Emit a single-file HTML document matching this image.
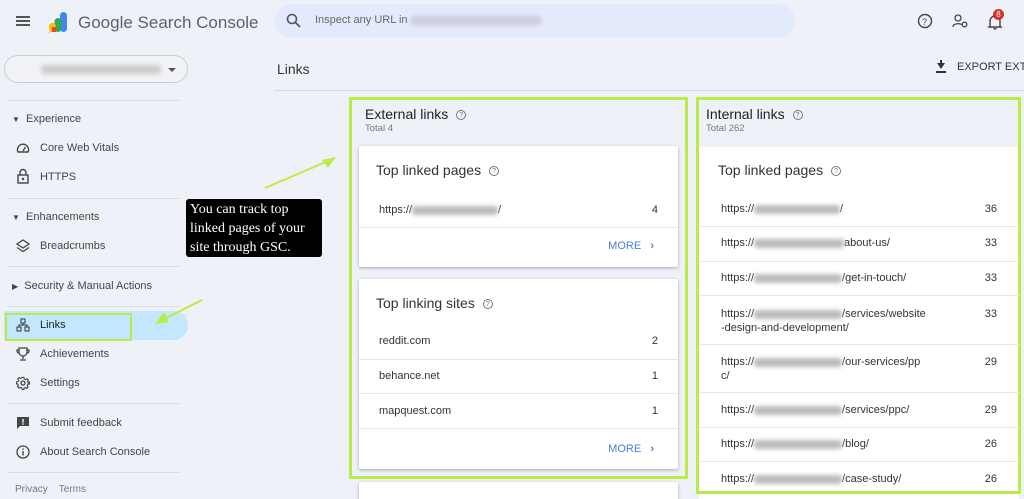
<!DOCTYPE html>
<html><head><style>
*{box-sizing:border-box;margin:0;padding:0}
html,body{width:1024px;height:499px;overflow:hidden}
body{background:#eef2f8;font-family:"Liberation Sans",Arial,sans-serif;color:#3c4043;position:relative}
.a{position:absolute}
.nav{font-size:11px;color:#444;}
.ic{position:absolute;left:16px}
.blur{display:inline-block;background:#bbb;filter:blur(2px);height:9px;vertical-align:middle;border-radius:3px}
.card{position:absolute;background:#fff;box-shadow:0 1px 3px rgba(0,0,0,.3);border-radius:2px}
.row{position:absolute;left:0;right:0;font-size:11px;color:#333;border-bottom:1px solid #e6e6e6}
.g{border:3px solid #b9ec45}
.q{display:inline-block;width:10px;height:10px;border:1px solid #777;border-radius:50%;font-size:7px;text-align:center;line-height:9px;color:#777;margin-left:8px;vertical-align:2px}
.more{position:absolute;right:24px;font-size:11px;color:#4a7fd8}
</style></head><body>
<!-- header -->
<div class="a" style="left:16px;top:16px;width:14px;height:2px;background:#555;box-shadow:0 4px 0 #555,0 8px 0 #555"></div>
<svg class="a" style="left:46px;top:10px" width="24" height="26" viewBox="0 0 24 26"><rect x="14" y="2" width="7" height="20" fill="#4285f4" rx="3.5"/><rect x="8.5" y="8" width="7" height="14" fill="#34a853" rx="3.5"/><rect x="3" y="13" width="7" height="9" fill="#fbbc04" rx="3.5"/><path d="M2 24l3-5h4z" fill="#fbbc04"/><rect x="6" y="17" width="4" height="5" fill="#ea4335"/></svg>
<div class="a" style="left:78px;top:13px;font-size:17px;color:#5f6368">Google Search Console</div>
<div class="a" style="left:275px;top:4px;width:520px;height:34px;background:#e3eafc;border-radius:17px"></div>
<svg class="a" style="left:286px;top:13px" width="15" height="15" viewBox="0 0 15 15"><circle cx="6" cy="6" r="4.5" fill="none" stroke="#555" stroke-width="1.6"/><line x1="9.5" y1="9.5" x2="14" y2="14" stroke="#555" stroke-width="1.8"/></svg>
<div class="a" style="left:315px;top:14px;font-size:11px;color:#666">Inspect any URL in <span class="blur" style="width:130px;background:#ccd"></span></div>
<svg class="a" style="left:917px;top:13px" width="16" height="16"><circle cx="8" cy="8" r="6.5" fill="none" stroke="#444" stroke-width="1.4"/><text x="5" y="12" font-size="9" fill="#444" font-family="Liberation Sans">?</text></svg>
<svg class="a" style="left:952px;top:13px" width="17" height="16"><circle cx="6" cy="5" r="3" fill="none" stroke="#444" stroke-width="1.3"/><path d="M1 14c0-4 8-4 9-2" fill="none" stroke="#444" stroke-width="1.3"/><circle cx="12.5" cy="11.5" r="2.3" fill="none" stroke="#444" stroke-width="1.3"/></svg>
<svg class="a" style="left:987px;top:13px" width="16" height="17"><path d="M3 13V8a5 5 0 0 1 10 0v5l1 1H2z" fill="none" stroke="#444" stroke-width="1.4"/><rect x="6.5" y="15" width="3" height="1.5" fill="#444"/></svg>
<div class="a" style="left:993px;top:9px;width:11px;height:11px;border-radius:50%;background:#d93025;color:#fff;font-size:8px;text-align:center;line-height:11px">8</div>
<!-- property select -->
<div class="a" style="left:4px;top:55px;width:184px;height:28px;border:1px solid #ccc;border-radius:14px;background:#f1f3f6"><span class="blur a" style="left:36px;top:9px;width:120px;background:#ccc"></span><div class="a" style="left:163px;top:12px;border:4px solid transparent;border-top:4px solid #555"></div></div>
<div class="a" style="left:8px;top:100px;width:172px;height:1px;background:#dcdcdc"></div>
<div class="a nav" style="left:12px;top:113px"><span style="font-size:8px">▼</span>&nbsp; Experience</div>
<svg class="ic" style="top:141px" width="14" height="14"><path d="M2 11A5.5 5.5 0 1 1 12 11z" fill="none" stroke="#444" stroke-width="1.4"/><path d="M7 10l2.5-4" stroke="#444" stroke-width="1.4"/></svg>
<div class="a nav" style="left:40px;top:142px">Core Web Vitals</div>
<svg class="ic" style="top:168px" width="14" height="16"><path d="M4 7V4.5a3 3 0 0 1 6 0V7" fill="none" stroke="#444" stroke-width="1.4"/><rect x="2" y="7" width="10" height="8" fill="none" stroke="#444" stroke-width="1.4"/><circle cx="7" cy="11" r="1.2" fill="#444"/></svg>
<div class="a nav" style="left:40px;top:171px">HTTPS</div>
<div class="a" style="left:8px;top:198px;width:172px;height:1px;background:#dcdcdc"></div>
<div class="a nav" style="left:12px;top:211px"><span style="font-size:8px">▼</span>&nbsp; Enhancements</div>
<svg class="ic" style="top:239px" width="14" height="14"><path d="M7 1l6 4-6 4-6-4z" fill="none" stroke="#444" stroke-width="1.3"/><path d="M1 8.5l6 4 6-4" fill="none" stroke="#444" stroke-width="1.3"/></svg>
<div class="a nav" style="left:40px;top:240px">Breadcrumbs</div>
<div class="a" style="left:8px;top:266px;width:172px;height:1px;background:#dcdcdc"></div>
<div class="a nav" style="left:12px;top:280px"><span style="font-size:8px">▶</span>&nbsp; Security &amp; Manual Actions</div>
<div class="a" style="left:8px;top:306px;width:172px;height:1px;background:#dcdcdc"></div>
<div class="a" style="left:4px;top:311px;width:184px;height:29px;background:#c2e7ff;border-radius:0 15px 15px 0"></div>
<div class="a" style="left:5px;top:313px;width:127px;height:28px;border:2px solid #b9ec45"></div>
<svg class="a" style="left:16px;top:318px" width="14" height="14"><rect x="5" y="1" width="4" height="4" fill="none" stroke="#333"/><rect x="1" y="9" width="4" height="4" fill="none" stroke="#333"/><rect x="9" y="9" width="4" height="4" fill="none" stroke="#333"/><path d="M7 5v2M3 9V7h8v2" fill="none" stroke="#333"/></svg>
<div class="a nav" style="left:40px;top:319px;color:#222">Links</div>
<svg class="ic" style="top:347px" width="14" height="14"><path d="M3 1h8v4a4 4 0 0 1-8 0z M3 3H1v1a2 2 0 0 0 2 2 M11 3h2v1a2 2 0 0 1-2 2 M7 9v3 M4 13h6" fill="none" stroke="#444" stroke-width="1.3"/></svg>
<div class="a nav" style="left:40px;top:348px">Achievements</div>
<svg class="ic" style="top:376px" width="14" height="14" viewBox="0 0 14 14"><circle cx="7" cy="7" r="2" fill="none" stroke="#444" stroke-width="1.3"/><path d="M6 1h2l.4 1.7 1.5.7 1.5-.9 1.4 1.4-.9 1.5.7 1.5L14 6v2l-1.7.4-.7 1.5.9 1.5-1.4 1.4-1.5-.9-1.5.7L8 14H6l-.4-1.7-1.5-.7-1.5.9-1.4-1.4.9-1.5-.7-1.5L0 8V6l1.7-.4.7-1.5-.9-1.5 1.4-1.4 1.5.9 1.5-.7z" fill="none" stroke="#444" stroke-width="1.2" transform="scale(.93) translate(.5 .5)"/></svg>
<div class="a nav" style="left:40px;top:377px">Settings</div>
<div class="a" style="left:8px;top:403px;width:172px;height:1px;background:#dcdcdc"></div>
<svg class="ic" style="top:416px" width="14" height="14"><path d="M1 1h12v9H4l-3 3z" fill="#444"/><rect x="6.3" y="3" width="1.4" height="3.5" fill="#fff"/><rect x="6.3" y="7.3" width="1.4" height="1.4" fill="#fff"/></svg>
<div class="a nav" style="left:40px;top:417px">Submit feedback</div>
<svg class="ic" style="top:445px" width="14" height="14"><circle cx="7" cy="7" r="6" fill="none" stroke="#444" stroke-width="1.3"/><rect x="6.3" y="6" width="1.4" height="4.5" fill="#444"/><rect x="6.3" y="3.5" width="1.4" height="1.4" fill="#444"/></svg>
<div class="a nav" style="left:40px;top:446px">About Search Console</div>
<div class="a" style="left:8px;top:472px;width:172px;height:1px;background:#dcdcdc"></div>
<div class="a" style="left:15px;top:484px;font-size:10px;color:#777">Privacy&nbsp;&nbsp;&nbsp; Terms</div>
<!-- callout -->
<div class="a" style="left:186px;top:199px;width:136px;height:58px;background:#000;border-radius:3px;color:#fff;font-family:'Liberation Serif',serif;font-size:14px;line-height:19px;padding:1px 4px;white-space:nowrap">You can track top<br>linked pages of your<br>site through GSC.</div>
<svg class="a" style="left:150px;top:150px" width="200" height="180"><path d="M115 38 L185 8" stroke="#b9ec45" stroke-width="2"/><path d="M186 7 L172 10 L178 18z" fill="#b9ec45"/><path d="M52 150 L8 172" stroke="#b9ec45" stroke-width="2"/><path d="M5 174 L14 162 L19 172z" fill="#b9ec45"/></svg>
<!-- Links title -->
<div class="a" style="left:277px;top:61px;font-size:14px;color:#333">Links</div>
<div class="a" style="left:936px;top:60px;width:10px;height:12px"><div style="width:0;margin-left:1px;border:4px solid transparent;border-top:6px solid #333;border-bottom:0;position:relative;top:3px"></div><div style="position:absolute;left:4px;top:0;width:2px;height:4px;background:#333"></div><div style="position:absolute;left:0;top:11px;width:10px;height:2px;background:#333"></div></div>
<div class="a" style="left:957px;top:61px;font-size:11px;color:#333;white-space:nowrap">EXPORT EXTE</div>
<div class="a" style="left:274px;top:90px;width:750px;height:1px;background:#d8d8d8"></div>
<!-- external -->
<div class="a g" style="left:349px;top:97px;width:339px;height:382px"></div>
<div class="a" style="left:365px;top:106px;font-size:14px;color:#222">External links<span class="q">?</span></div>
<div class="a" style="left:365px;top:123px;font-size:9.5px;color:#777">Total 4</div>
<div class="card" style="left:359px;top:146px;width:319px;height:121px">
<div class="a" style="left:17px;top:16px;font-size:14px;color:#333">Top linked pages<span class="q">?</span></div>
<div class="row" style="top:54px;height:28px;padding:4px 20px 0 20px">https://<span class="blur" style="width:86px"></span>/<span style="float:right">4</span></div>
<div class="more" style="top:94px">MORE&nbsp;&nbsp;&nbsp;<b>›</b></div>
</div>
<div class="card" style="left:359px;top:279px;width:319px;height:190px">
<div class="a" style="left:17px;top:16px;font-size:14px;color:#333">Top linking sites<span class="q">?</span></div>
<div class="row" style="top:47px;height:34px;padding:9px 20px 0 20px">reddit.com<span style="float:right">2</span></div>
<div class="row" style="top:81px;height:34px;padding:10px 20px 0 20px">behance.net<span style="float:right">1</span></div>
<div class="row" style="top:115px;height:35px;padding:11px 20px 0 20px">mapquest.com<span style="float:right">1</span></div>
<div class="more" style="top:164px">MORE&nbsp;&nbsp;&nbsp;<b>›</b></div>
</div>
<div class="card" style="left:359px;top:482px;width:319px;height:30px"></div>
<!-- internal -->
<div class="a" style="left:699px;top:147px;width:320px;height:352px;background:#fff"></div>
<div class="a g" style="left:696px;top:97px;width:325px;height:397px"></div>
<div class="a" style="left:706px;top:106px;font-size:14px;color:#222">Internal links<span class="q">?</span></div>
<div class="a" style="left:706px;top:123px;font-size:9.5px;color:#777">Total 262</div>
<div class="a" style="left:699px;top:147px;width:320px;height:345px">
<div class="a" style="left:19px;top:15px;font-size:14px;color:#333">Top linked pages<span class="q">?</span></div>
<div class="row" style="top:45px;height:35px;padding:11px 22px 0 22px">https://<span class="blur" style="width:86px"></span>/<span style="float:right">36</span></div>
<div class="row" style="top:80px;height:35px;padding:10px 22px 0 22px">https://<span class="blur" style="width:90px"></span>about-us/<span style="float:right">33</span></div>
<div class="row" style="top:115px;height:34px;padding:10px 22px 0 22px">https://<span class="blur" style="width:88px"></span>/get-in-touch/<span style="float:right">33</span></div>
<div class="row" style="top:149px;height:49px;padding:11px 22px 0 22px;line-height:14px"><span style="float:right">33</span>https://<span class="blur" style="width:88px"></span>/services/website<br>-design-and-development/</div>
<div class="row" style="top:198px;height:48px;padding:10px 22px 0 22px;line-height:14px"><span style="float:right">29</span>https://<span class="blur" style="width:88px"></span>/our-services/pp<br>c/</div>
<div class="row" style="top:246px;height:35px;padding:11px 22px 0 22px">https://<span class="blur" style="width:88px"></span>/services/ppc/<span style="float:right">29</span></div>
<div class="row" style="top:281px;height:34px;padding:10px 22px 0 22px">https://<span class="blur" style="width:88px"></span>/blog/<span style="float:right">26</span></div>
<div class="row" style="top:315px;height:30px;padding:11px 22px 0 22px;border:0">https://<span class="blur" style="width:88px"></span>/case-study/<span style="float:right">26</span></div>
</div>
</body></html>
